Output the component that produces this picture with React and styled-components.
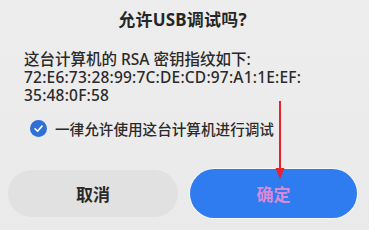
import React from "react"
import styled, { createGlobalStyle } from "styled-components"

const GlobalStyle = createGlobalStyle`
  html, body {
    margin: 0;
    padding: 0;
    background: #ececec;
  }
  body {
    font-family: "Noto Sans", "Noto Sans CJK SC", sans-serif;
  }
`

const Dialog = styled.div`
  position: relative;
  width: 369px;
  height: 230px;
  box-sizing: border-box;
  padding: 8px 12px 0 8px;
  background: linear-gradient(180deg, #ededed 0%, #eaeaea 100%);
  overflow: hidden;
`

const Title = styled.h2`
  margin: 0;
  height: 24px;
  text-align: center;
  font-size: 17px;
  line-height: 24px;
  font-weight: 700;
  color: #262626;
  letter-spacing: 0.2px;
`

const Message = styled.div`
  margin: 18px 0 0 16px;
  color: #2a2a2a;
  font-weight: 500;
`

const Line = styled.div`
  height: 18px;
  font-size: 15.5px;
  line-height: 18px;
  white-space: nowrap;
  letter-spacing: ${p => p.$spacing || 0}px;
`

const CheckRow = styled.label`
  display: flex;
  align-items: center;
  gap: 8px;
  height: 22px;
  margin: 13px 0 0 22px;
  font-size: 14.6px;
  font-weight: 500;
  color: #2a2a2a;
`

const CheckMark = styled.span`
  display: flex;
  align-items: center;
  justify-content: center;
  width: 17px;
  height: 17px;
  border-radius: 50%;
  background: #2f6fd8;
`

const Buttons = styled.div`
  display: flex;
  align-items: center;
  gap: 12px;
  margin-top: 30px;
`

const Button = styled.button`
  flex: ${p => p.$w} 0 0;
  height: ${p => (p.$primary ? 49 : 47)}px;
  border: none;
  border-radius: 25px;
  font-family: inherit;
  font-size: 17px;
  font-weight: 700;
  background: ${p => (p.$primary ? "#2f7cf0" : "#e1e1e1")};
  color: ${p => (p.$primary ? "#d88ad8" : "#2a2a2a")};
  box-shadow: ${p => (p.$primary ? "0 0 0 1px #f7f7f7" : "none")};
`

const Arrow = styled.svg`
  position: absolute;
  left: 275px;
  top: 101px;
`

export default function App() {
  return (
    <>
      <GlobalStyle />
      <Dialog>
        <Title>允许USB调试吗?</Title>
        <Message>
          <Line>这台计算机的 RSA 密钥指纹如下:</Line>
          <Line $spacing={0.2}>72:E6:73:28:99:7C:DE:CD:97:A1:1E:EF:</Line>
          <Line $spacing={0.2}>35:48:0F:58</Line>
        </Message>
        <CheckRow>
          <CheckMark>
            <svg width="11" height="11" viewBox="0 0 12 12">
              <path d="M2.2 6.3 L5 9 L9.8 3.4" fill="none" stroke="#fff" strokeWidth="1.8" strokeLinecap="round" strokeLinejoin="round" />
            </svg>
          </CheckMark>
          一律允许使用这台计算机进行调试
        </CheckRow>
        <Buttons>
          <Button $w={170}>取消</Button>
          <Button $w={167} $primary>确定</Button>
        </Buttons>
        <Arrow width="10" height="78" viewBox="0 0 10 78">
          <rect x="4" y="0" width="2" height="70" fill="#e8212b" />
          <path d="M0.5 67 L9.5 67 L5 78 Z" fill="#e8212b" />
        </Arrow>
      </Dialog>
    </>
  )
}
